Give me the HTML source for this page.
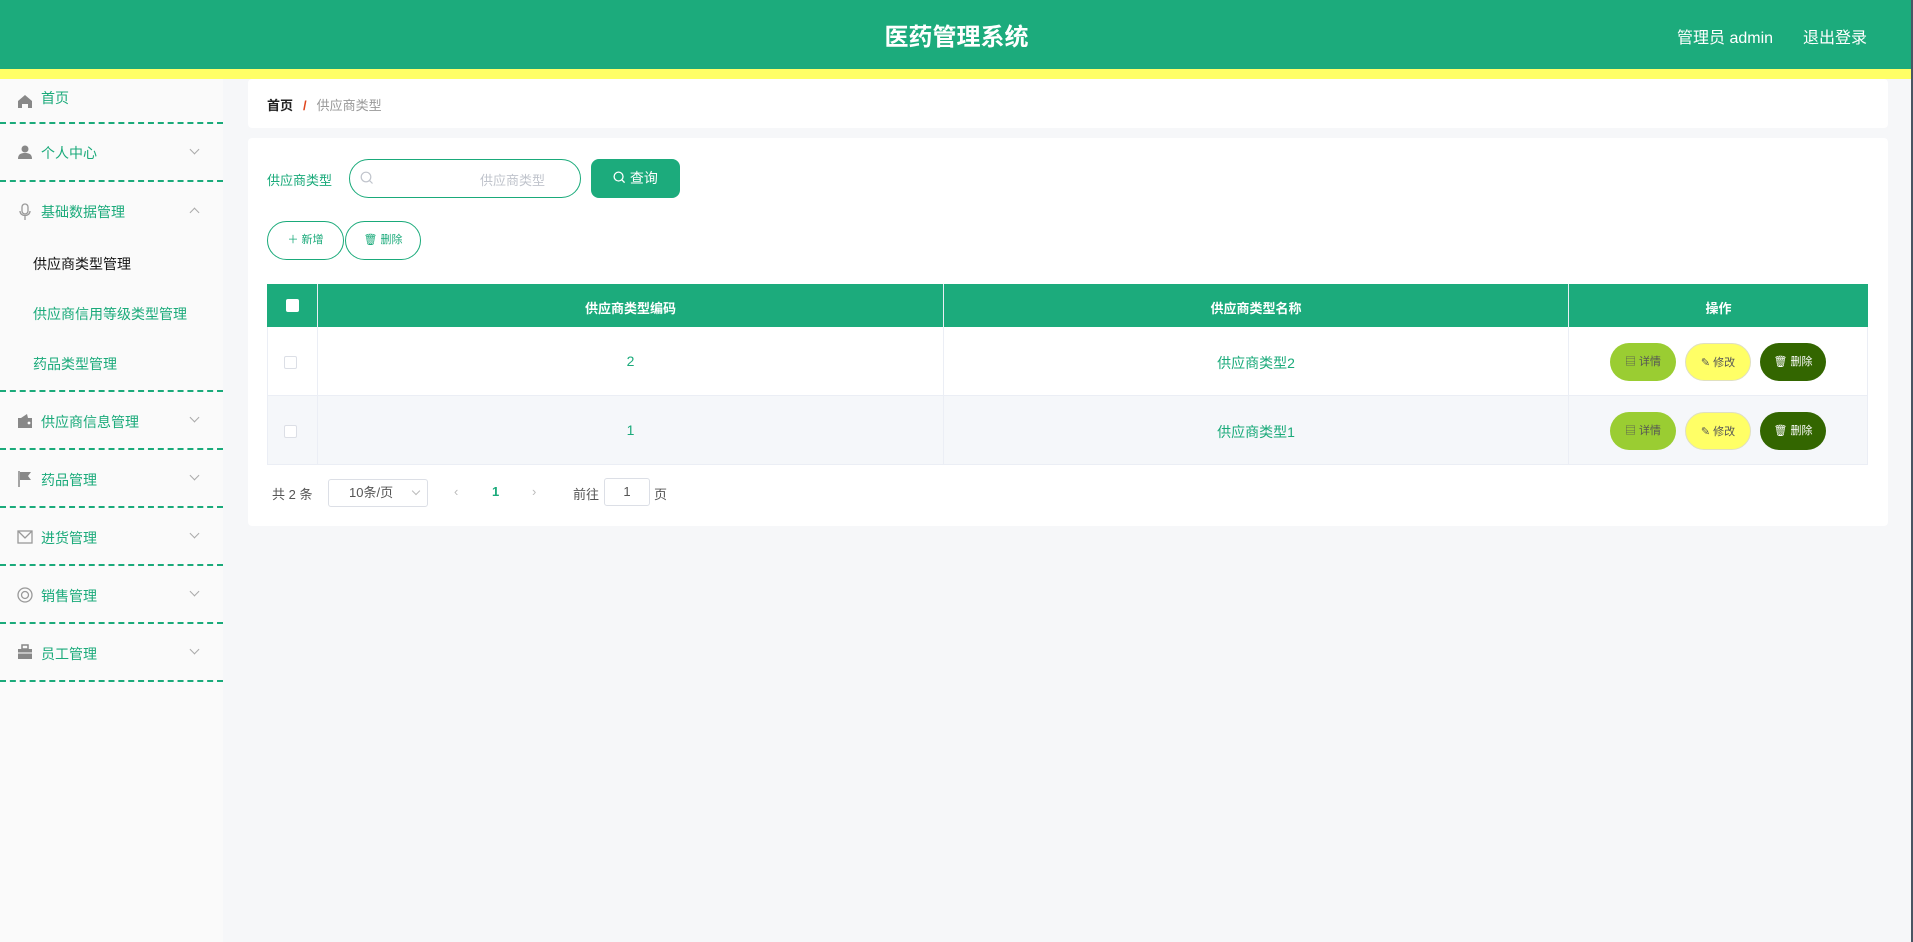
<!DOCTYPE html>
<html><head><meta charset="utf-8"><style>
*{margin:0;padding:0;box-sizing:border-box}
body{width:1913px;height:942px;overflow:hidden;background:#f6f7f9;font-family:"Liberation Sans","Noto Sans CJK SC",sans-serif;position:relative}
.abs{position:absolute}
.hdr{left:0;top:0;width:1913px;height:69px;background:#1cab7c}
.ybar{left:0;top:69px;width:1913px;height:10px;background:#ffff66}
.rline{left:1911px;top:0;width:2px;height:942px;background:#4a5563}
.title{left:0;width:1913px;top:17px;text-align:center;color:#fff;font-size:24px;font-weight:bold}
.side{left:0;top:79px;width:223px;height:863px;background:#fafafa}
.mi{position:absolute;left:0;width:223px;height:58px;border-bottom:2px dashed #1aaa7a}
.mi .t{position:absolute;left:41px;color:#1aaa7a;font-size:14px}
.mi svg.ic{position:absolute;left:17px}
.chev{position:absolute;left:191px;width:7px;height:7px;border-right:1px solid #aaa;border-bottom:1px solid #aaa;transform:rotate(45deg)}
.sub{position:absolute;left:33px;font-size:14px;color:#1aaa7a}
.panel{background:#fff;border-radius:4px}
.tbl td{position:absolute}
.cell{position:absolute;text-align:center;font-size:14px}
.btn{position:absolute;width:66px;height:38px;border-radius:19px;font-size:11px;text-align:center;line-height:38px}
</style></head><body>
<div class="abs hdr"></div>
<div class="abs title">医药管理系统</div>
<div class="abs" style="left:1677px;top:24px;color:#fff;font-size:16px">管理员 admin</div>
<div class="abs" style="left:1803px;top:24px;color:#fff;font-size:16px">退出登录</div>
<div class="abs ybar"></div>

<div class="abs side">
 <div class="mi" style="top:0;height:45px"><svg class="ic" style="top:14px" width="16" height="16" viewBox="0 0 16 16"><path d="M1 8L8 2l7 6v7h-4v-4H5v4H1z" fill="#888"/></svg><span class="t" style="top:9px">首页</span></div>
 <div class="mi" style="top:45px"><svg class="ic" style="top:20px" width="16" height="16" viewBox="0 0 16 16"><circle cx="8" cy="5" r="3.5" fill="#888"/><path d="M1 15c0-5 3-6 7-6s7 1 7 6z" fill="#888"/></svg><span class="t" style="top:19px">个人中心</span><i class="chev" style="top:22px"></i></div>
 <div class="mi" style="top:103px;height:210px"><svg class="ic" style="top:21px" width="16" height="18" viewBox="0 0 16 18"><rect x="5" y="1" width="6" height="10" rx="3" fill="none" stroke="#999" stroke-width="1.3"/><path d="M3 8c0 6 10 6 10 0M8 13v4" fill="none" stroke="#999" stroke-width="1.3"/></svg><span class="t" style="top:20px">基础数据管理</span><i class="chev" style="top:27px;transform:rotate(225deg)"></i>
  <span class="sub" style="top:72px;color:#111">供应商类型管理</span>
  <span class="sub" style="top:122px">供应商信用等级类型管理</span>
  <span class="sub" style="top:172px">药品类型管理</span></div>
 <div class="mi" style="top:313px"><svg class="ic" style="top:21px" width="16" height="16" viewBox="0 0 16 16"><path d="M1 5h14v10H1z" fill="#888"/><path d="M4 5l6-4 1 4" fill="#888"/><circle cx="12" cy="10" r="1.4" fill="#fff"/></svg><span class="t" style="top:20px">供应商信息管理</span><i class="chev" style="top:22px"></i></div>
 <div class="mi" style="top:371px"><svg class="ic" style="top:20px" width="16" height="18" viewBox="0 0 16 18"><path d="M2 1v16" stroke="#888" stroke-width="1.5"/><path d="M3 2h11l-3 4 3 4H3z" fill="#888"/></svg><span class="t" style="top:20px">药品管理</span><i class="chev" style="top:22px"></i></div>
 <div class="mi" style="top:429px"><svg class="ic" style="top:21px" width="16" height="16" viewBox="0 0 16 16"><rect x="1" y="2" width="14" height="12" fill="none" stroke="#999" stroke-width="1.3"/><path d="M1 2l7 7 7-7" fill="none" stroke="#999" stroke-width="1.3"/></svg><span class="t" style="top:20px">进货管理</span><i class="chev" style="top:22px"></i></div>
 <div class="mi" style="top:487px"><svg class="ic" style="top:20px" width="16" height="18" viewBox="0 0 16 18"><circle cx="8" cy="9" r="7" fill="none" stroke="#999" stroke-width="1.3"/><circle cx="8" cy="9" r="3.5" fill="none" stroke="#999" stroke-width="1.3"/></svg><span class="t" style="top:20px">销售管理</span><i class="chev" style="top:22px"></i></div>
 <div class="mi" style="top:545px"><svg class="ic" style="top:20px" width="16" height="16" viewBox="0 0 16 16"><rect x="5" y="1" width="6" height="4" fill="none" stroke="#888" stroke-width="1.5"/><rect x="1" y="5" width="14" height="10" fill="#888"/><path d="M1 9h14" stroke="#fff"/></svg><span class="t" style="top:20px">员工管理</span><i class="chev" style="top:22px"></i></div>
</div>

<div class="abs panel" style="left:248px;top:79px;width:1640px;height:49px"></div>
<div class="abs" style="left:267px;top:95px;font-size:13px"><b style="color:#222">首页</b><span style="color:#e0461e;margin:0 10px;font-weight:bold">/</span><span style="color:#999">供应商类型</span></div>

<div class="abs panel" style="left:248px;top:138px;width:1640px;height:388px"></div>
<div class="abs" style="left:267px;top:170px;font-size:13px;color:#1aaa7a">供应商类型</div>
<div class="abs" style="left:349px;top:159px;width:232px;height:39px;border:1px solid #1aaa7a;border-radius:20px"></div>
<svg class="abs" style="left:360px;top:171px" width="14" height="14" viewBox="0 0 14 14"><circle cx="6" cy="6" r="4.8" fill="none" stroke="#c0c4cc" stroke-width="1.2"/><path d="M9.5 9.5l3 3" stroke="#c0c4cc" stroke-width="1.2"/></svg>
<div class="abs" style="left:480px;top:170px;font-size:13px;color:#c0c4cc">供应商类型</div>
<div class="abs" style="left:591px;top:159px;width:89px;height:39px;background:#1cab7c;border-radius:8px;color:#fff;font-size:14px;line-height:39px;text-align:center"><svg width="13" height="13" viewBox="0 0 14 14" style="vertical-align:-1px"><circle cx="6" cy="6" r="4.8" fill="none" stroke="#fff" stroke-width="1.4"/><path d="M9.5 9.5l3 3" stroke="#fff" stroke-width="1.4"/></svg> 查询</div>
<div class="abs" style="left:267px;top:221px;width:77px;height:39px;border:1px solid #1aaa7a;border-radius:20px;font-size:11px;color:#1aaa7a;text-align:center;line-height:37px">＋ 新增</div>
<div class="abs" style="left:345px;top:221px;width:76px;height:39px;border:1px solid #1aaa7a;border-radius:20px;font-size:11px;color:#1aaa7a;text-align:center;line-height:37px">🗑 删除</div>

<div class="abs" style="left:267px;top:284px;width:1601px;height:43px;background:#1cab7c"></div>
<div class="abs" style="left:317px;top:284px;width:1px;height:181px;background:#ebeef5"></div>
<div class="abs" style="left:943px;top:284px;width:1px;height:181px;background:#ebeef5"></div>
<div class="abs" style="left:1568px;top:284px;width:1px;height:181px;background:#ebeef5"></div>
<div class="abs" style="left:267px;top:327px;width:1601px;height:69px;background:#fff;border-left:1px solid #ebeef5;border-right:1px solid #ebeef5;border-bottom:1px solid #ebeef5"></div>
<div class="abs" style="left:267px;top:396px;width:1601px;height:69px;background:#f5f7fa;border:1px solid #ebeef5;border-top:none"></div>
<div class="abs" style="left:317px;top:284px;width:1px;height:181px;background:#ebeef5"></div>
<div class="abs" style="left:943px;top:284px;width:1px;height:181px;background:#ebeef5"></div>
<div class="abs" style="left:1568px;top:284px;width:1px;height:181px;background:#ebeef5"></div>
<div class="abs" style="left:286px;top:299px;width:13px;height:13px;background:#fff;border-radius:2px"></div>
<div class="cell" style="left:318px;width:625px;top:298px;color:#fff;font-weight:bold;font-size:13px">供应商类型编码</div>
<div class="cell" style="left:944px;width:624px;top:298px;color:#fff;font-weight:bold;font-size:13px">供应商类型名称</div>
<div class="cell" style="left:1569px;width:299px;top:298px;color:#fff;font-weight:bold;font-size:13px">操作</div>
<div class="abs" style="left:284px;top:356px;width:13px;height:13px;border:1px solid #dcdfe6;background:#fff;border-radius:2px"></div>
<div class="abs" style="left:284px;top:425px;width:13px;height:13px;border:1px solid #dcdfe6;background:#fff;border-radius:2px"></div>
<div class="cell" style="left:318px;width:625px;top:353px;color:#1aaa7a">2</div>
<div class="cell" style="left:944px;width:624px;top:353px;color:#1aaa7a">供应商类型2</div>
<div class="cell" style="left:318px;width:625px;top:422px;color:#1aaa7a">1</div>
<div class="cell" style="left:944px;width:624px;top:422px;color:#1aaa7a">供应商类型1</div>
<div class="btn" style="left:1610px;top:343px;background:#9acd32;color:#555">▤ 详情</div>
<div class="btn" style="left:1685px;top:343px;background:#ffff66;border:1px solid #e0e0c0;color:#555">✎ 修改</div>
<div class="btn" style="left:1760px;top:343px;background:#336600;color:#fff">🗑 删除</div>
<div class="btn" style="left:1610px;top:412px;background:#9acd32;color:#555">▤ 详情</div>
<div class="btn" style="left:1685px;top:412px;background:#ffff66;border:1px solid #e0e0c0;color:#555">✎ 修改</div>
<div class="btn" style="left:1760px;top:412px;background:#336600;color:#fff">🗑 删除</div>

<div class="abs" style="left:272px;top:484px;font-size:13px;color:#555">共 2 条</div>
<div class="abs" style="left:328px;top:479px;width:100px;height:28px;border:1px solid #dcdfe6;border-radius:3px;font-size:13px;color:#555;line-height:26px;padding-left:20px">10条/页<i style="position:absolute;left:84px;top:8px;width:6px;height:6px;border-right:1px solid #bbb;border-bottom:1px solid #bbb;transform:rotate(45deg)"></i></div>
<div class="abs" style="left:454px;top:484px;font-size:13px;color:#bbb">‹</div>
<div class="abs" style="left:492px;top:484px;font-size:13px;color:#1aaa7a;font-weight:bold">1</div>
<div class="abs" style="left:532px;top:484px;font-size:13px;color:#bbb">›</div>
<div class="abs" style="left:573px;top:484px;font-size:13px;color:#555">前往</div>
<div class="abs" style="left:604px;top:478px;width:46px;height:28px;border:1px solid #dcdfe6;border-radius:3px;font-size:13px;color:#555;text-align:center;line-height:26px">1</div>
<div class="abs" style="left:654px;top:484px;font-size:13px;color:#555">页</div>
<div class="abs rline"></div>
</body></html>
